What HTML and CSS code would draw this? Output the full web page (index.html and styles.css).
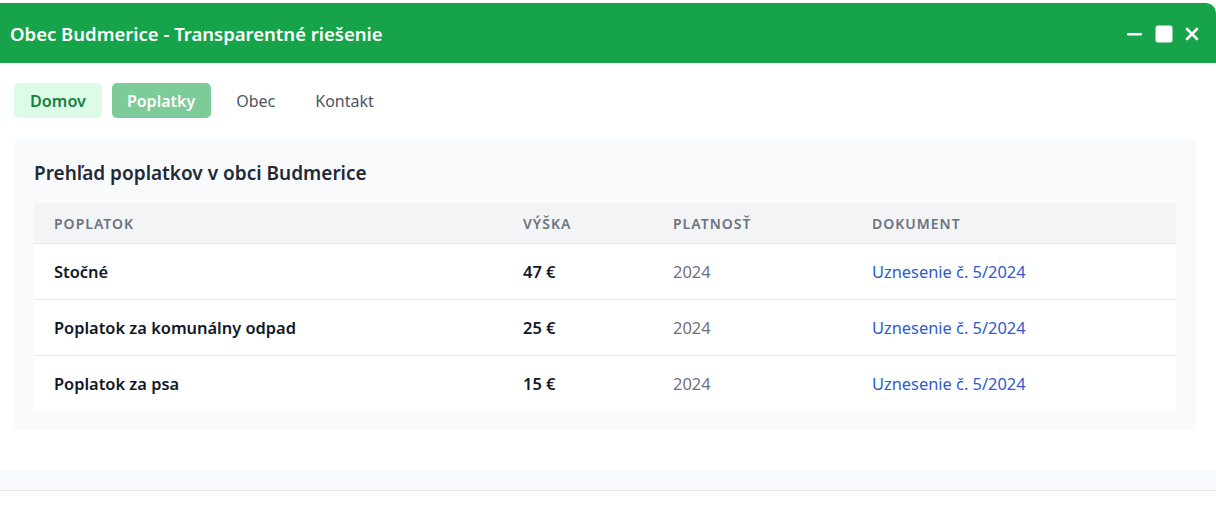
FILE: index.html
```html
<!DOCTYPE html>
<html lang="sk">
<head>
<meta charset="utf-8">
<title>Obec Budmerice</title>
<link rel="stylesheet" href="styles.css">
</head>
<body>
<div class="window">
  <header class="titlebar">
    <h1 class="title">Obec Budmerice - Transparentné riešenie</h1>
    <div class="controls">
      <svg class="ctl ctl-min" width="16" height="16" viewBox="0 0 16 16"><rect x="0" y="7" width="15" height="2.6" rx="1" fill="#fff"/></svg>
      <svg class="ctl ctl-max" width="18" height="18" viewBox="0 0 18 18"><rect x="0.5" y="0.5" width="17" height="17" rx="2.5" fill="#fff"/></svg>
      <svg class="ctl ctl-close" width="14" height="14" viewBox="0 0 14 14"><path d="M2 2 L12 12 M12 2 L2 12" stroke="#fff" stroke-width="2.6" stroke-linecap="round"/></svg>
    </div>
  </header>
  <nav class="nav">
    <a class="tab tab-home">Domov</a>
    <a class="tab tab-active">Poplatky</a>
    <a class="tab">Obec</a>
    <a class="tab">Kontakt</a>
  </nav>
  <section class="card">
    <h2 class="card-title">Prehľad poplatkov v obci Budmerice</h2>
    <div class="table">
      <div class="row head">
        <div class="cell">Poplatok</div>
        <div class="cell">Výška</div>
        <div class="cell">Platnosť</div>
        <div class="cell">Dokument</div>
      </div>
      <div class="row">
        <div class="cell name">Stočné</div>
        <div class="cell amount">47 €</div>
        <div class="cell year">2024</div>
        <div class="cell"><a class="doc">Uznesenie č. 5/2024</a></div>
      </div>
      <div class="row">
        <div class="cell name">Poplatok za komunálny odpad</div>
        <div class="cell amount">25 €</div>
        <div class="cell year">2024</div>
        <div class="cell"><a class="doc">Uznesenie č. 5/2024</a></div>
      </div>
      <div class="row last">
        <div class="cell name">Poplatok za psa</div>
        <div class="cell amount">15 €</div>
        <div class="cell year">2024</div>
        <div class="cell"><a class="doc">Uznesenie č. 5/2024</a></div>
      </div>
    </div>
  </section>
  <footer class="footer"></footer>
</div>
</body>
</html>
```

FILE: styles.css
```css
* { box-sizing: border-box; }
html, body { margin: 0; padding: 0; background: #ffffff; }
body {
  font-family: "Noto Sans", "Open Sans", sans-serif;
  color: #111827;
  padding-top: 3px;
}
.window {
  width: 1216px;
  background: #ffffff;
  border-top-right-radius: 10px;
  box-shadow: 0 6px 10px rgba(0, 0, 0, 0.14);
  overflow: hidden;
}
.titlebar {
  height: 60px;
  background: #16a34a;
  display: flex;
  align-items: center;
  justify-content: space-between;
  padding: 1px 17px 0 10px;
}
.title {
  margin: 0;
  color: #ffffff;
  font-size: 18.5px;
  font-weight: 600;
}
.controls {
  display: flex;
  align-items: center;
  gap: 12px;
}
.ctl { display: block; }
.nav {
  display: flex;
  gap: 10px;
  padding: 20px 14px 0;
}
.tab {
  display: block;
  height: 35px;
  line-height: 36px;
  padding: 0 15px;
  border-radius: 5px;
  font-size: 16px;
  color: #4b5563;
}
.tab-home {
  background: #dcfce7;
  color: #15803d;
  font-weight: 600;
  font-size: 16.2px;
  padding: 0 16px;
}
.tab-active {
  background: #7ccb98;
  color: #ffffff;
  font-weight: 600;
  padding: 0 16px 0 15px;
}
.card {
  margin: 20px 20px 40px 14px;
  background: #f9fafb;
  border-radius: 6px;
  padding: 20px;
}
.card-title {
  margin: 0 0 15px;
  font-size: 19px;
  line-height: 30px;
  font-weight: 600;
  color: #1f2937;
}
.table { background: #ffffff; }
.row {
  display: grid;
  grid-template-columns: 469px 150px 199px 1fr;
  height: 56px;
  align-items: center;
  border-bottom: 1px solid #e5e7eb;
}
.row.last { border-bottom: none; height: 55px; }
.row.head {
  height: 41px;
  background: #f3f4f6;
  text-transform: uppercase;
  font-size: 14px;
  font-weight: 600;
  color: #6b7280;
  letter-spacing: 1px;
}
.cell { padding-left: 20px; }
.row:not(.head) .cell { font-size: 16.4px; }
.name, .amount { font-weight: 600; color: #111827; }
.year { color: #6b7280; }
.doc { color: #2f5ccc; }
.footer {
  height: 20px;
  background: #f8fafc;
  border-bottom: 1px solid #e2e8f0;
}
```
